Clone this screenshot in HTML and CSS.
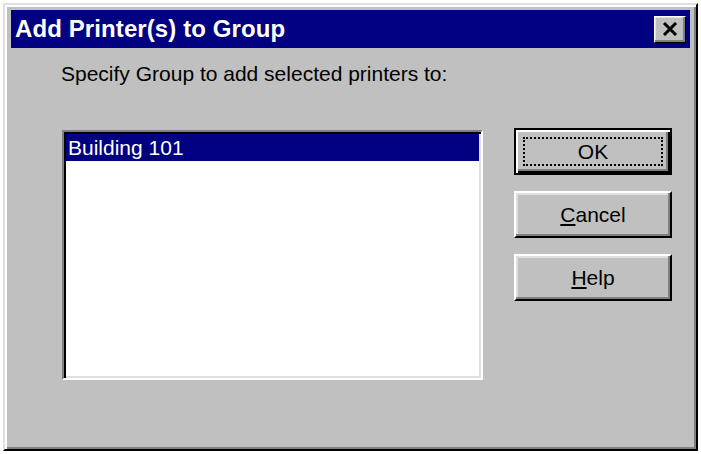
FILE: index.html
```html
<!DOCTYPE html>
<html>
<head>
<meta charset="utf-8">
<title>Add Printer(s) to Group</title>
<link rel="stylesheet" href="styles.css">
</head>
<body>
<div class="window">
  <div class="titlebar">
    <span class="title">Add Printer(s) to Group</span>
    <div class="close">
      <svg width="16" height="14" viewBox="0 0 16 14">
        <path d="M2 1 L14 13 M14 1 L2 13" stroke="#000" stroke-width="3" fill="none"/>
      </svg>
    </div>
  </div>
  <div class="content">
    <div class="left">
      <div class="label">Specify Group to add selected printers to:</div>
      <div class="listbox">
        <div class="item selected">Building 101</div>
      </div>
    </div>
    <div class="buttons">
      <div class="btn default"><span class="focus">OK</span></div>
      <div class="btn"><span><u>C</u>ancel</span></div>
      <div class="btn"><span><u>H</u>elp</span></div>
    </div>
  </div>
</div>
</body>
</html>
```
FILE: styles.css
```css
html, body {
  margin: 0;
  padding: 0;
  background: #ffffff;
}
body {
  padding: 3px;
  font-family: "Liberation Sans", Arial, sans-serif;
}
.window {
  box-sizing: border-box;
  width: 695px;
  height: 448px;
  background: #c0c0c0;
  border: 2px solid;
  border-color: #dfdfdf #000000 #000000 #dfdfdf;
  box-shadow: inset 2px 2px #ffffff, inset -2px -2px #808080;
  padding: 5px 6px;
  display: flex;
  flex-direction: column;
}
.titlebar {
  height: 38px;
  background: #000080;
  display: flex;
  align-items: center;
  justify-content: space-between;
  padding: 0 4px 0 4px;
}
.title {
  color: #ffffff;
  font-weight: bold;
  font-size: 24px;
  letter-spacing: 0.1px;
}
.close {
  box-sizing: border-box;
  width: 32px;
  height: 27px;
  background: #c0c0c0;
  border: 1px solid;
  border-color: #ffffff #000000 #000000 #ffffff;
  box-shadow: inset -2px -2px #808080, inset 1px 1px #dfdfdf;
  display: flex;
  align-items: center;
  justify-content: center;
  padding-bottom: 1px;
}
.content {
  display: flex;
  padding-left: 50px;
}
.left {
  display: flex;
  flex-direction: column;
}
.label {
  font-size: 21px;
  line-height: 24px;
  color: #000000;
  margin-top: 14px;
}
.listbox {
  box-sizing: border-box;
  width: 421px;
  height: 250px;
  margin-top: 44px;
  margin-left: 1px;
  background: #ffffff;
  border: 2px solid;
  border-color: #808080 #ffffff #ffffff #808080;
  box-shadow: inset 2px 2px #000000, inset -2px -2px #dfdfdf;
  padding: 2px;
}
.item {
  height: 27px;
  line-height: 27px;
  font-size: 21px;
  padding-left: 2px;
}
.selected {
  background: #000080;
  color: #ffffff;
}
.buttons {
  display: flex;
  flex-direction: column;
  gap: 16px;
  margin-top: 80px;
  margin-left: 31px;
}
.btn {
  box-sizing: border-box;
  width: 158px;
  height: 47px;
  background: #c0c0c0;
  border: 2px solid;
  border-color: #ffffff #000000 #000000 #ffffff;
  box-shadow: inset -2px -2px #808080, inset 2px 2px #dfdfdf;
  display: flex;
  align-items: center;
  justify-content: center;
  font-size: 21px;
  color: #000000;
}
.btn.default {
  border: 2px solid #000000;
  box-shadow: inset 2px 2px #ffffff, inset -2px -2px #000000, inset -4px -4px #808080;
}
.focus {
  box-sizing: border-box;
  width: 140px;
  height: 29px;
  border: 2px dotted #000000;
  display: flex;
  align-items: center;
  justify-content: center;
}
```
